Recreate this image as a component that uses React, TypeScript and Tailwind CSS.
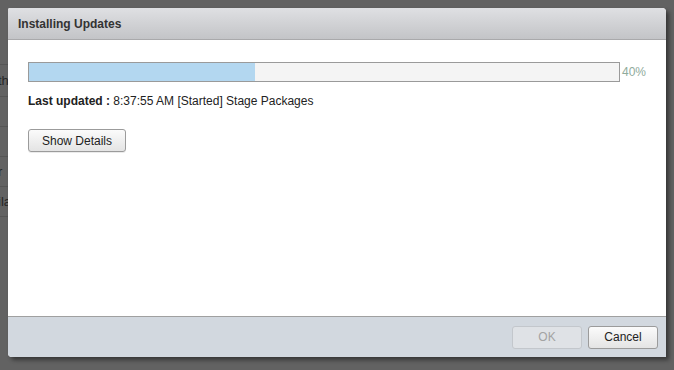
export default function App() {
  const rows = [
    { h: 28, text: "" },
    { h: 32, text: "th" },
    { h: 30, text: "" },
    { h: 30, text: "" },
    { h: 30, text: "r" },
    { h: 30, text: "ila" },
  ];

  return (
    <div
      className="relative w-[674px] h-[370px] overflow-hidden bg-[#626262] text-[12px]"
      style={{ fontFamily: '"Liberation Sans", Arial, sans-serif' }}
    >
      {/* dimmed page behind the modal */}
      <div className="pt-[37px] w-[60px]">
        {rows.map((r, i) => (
          <div
            key={i}
            className="flex items-center border-b border-[#555555] text-[#262626] text-[13px] pl-[1px] -ml-[3px]"
            style={{ height: r.h }}
          >
            {r.text}
          </div>
        ))}
      </div>

      {/* modal */}
      <div className="absolute left-[8px] top-[8px] w-[658px] h-[349px] flex flex-col bg-white rounded-tr-[4px] rounded-bl-[4px] rounded-tl-[2px] overflow-hidden shadow-[3px_3px_4px_rgba(0,0,0,0.45)]">
        <div className="h-[32px] shrink-0 flex items-center px-[10px] border-b border-[#a9a9ab] bg-gradient-to-b from-[#dfe0e3] to-[#c3c4c7]">
          <span className="font-bold text-[#333333] pt-[1px]">Installing Updates</span>
        </div>

        <div className="flex-1 px-[20px] pt-[22px]">
          <div className="flex items-center">
            <div className="w-[594px] h-[20px] border border-[#9a9a9a] bg-[#f4f4f4]">
              <div className="h-full w-[226px] bg-[#b3d7f0]" />
            </div>
            <span className="ml-[2px] text-[#90ab9c]">40%</span>
          </div>
          <div className="mt-[10px] text-[#222222]">
            <span className="font-bold">Last updated : </span>
            8:37:55 AM [Started] Stage Packages
          </div>
          <button className="mt-[19px] h-[23px] w-[98px] rounded-[3px] border border-[#9b9b9b] bg-gradient-to-b from-[#fbfbfb] to-[#e4e4e4] text-[#222222] shadow-[0_1px_0_rgba(0,0,0,0.08)]">
            Show Details
          </button>
        </div>

        <div className="h-[41px] shrink-0 flex items-center justify-end gap-[6px] px-[8px] border-t border-[#a0a0a0] bg-[#d2d8df]">
          <button
            disabled
            className="h-[23px] w-[70px] rounded-[3px] border border-[#c3c7cc] bg-[#dfe2e6] text-[#a3a3a3]"
          >
            OK
          </button>
          <button className="h-[23px] w-[70px] rounded-[3px] border border-[#9b9b9b] bg-gradient-to-b from-[#fbfbfb] to-[#e4e4e4] text-[#222222]">
            Cancel
          </button>
        </div>
      </div>
    </div>
  );
}
